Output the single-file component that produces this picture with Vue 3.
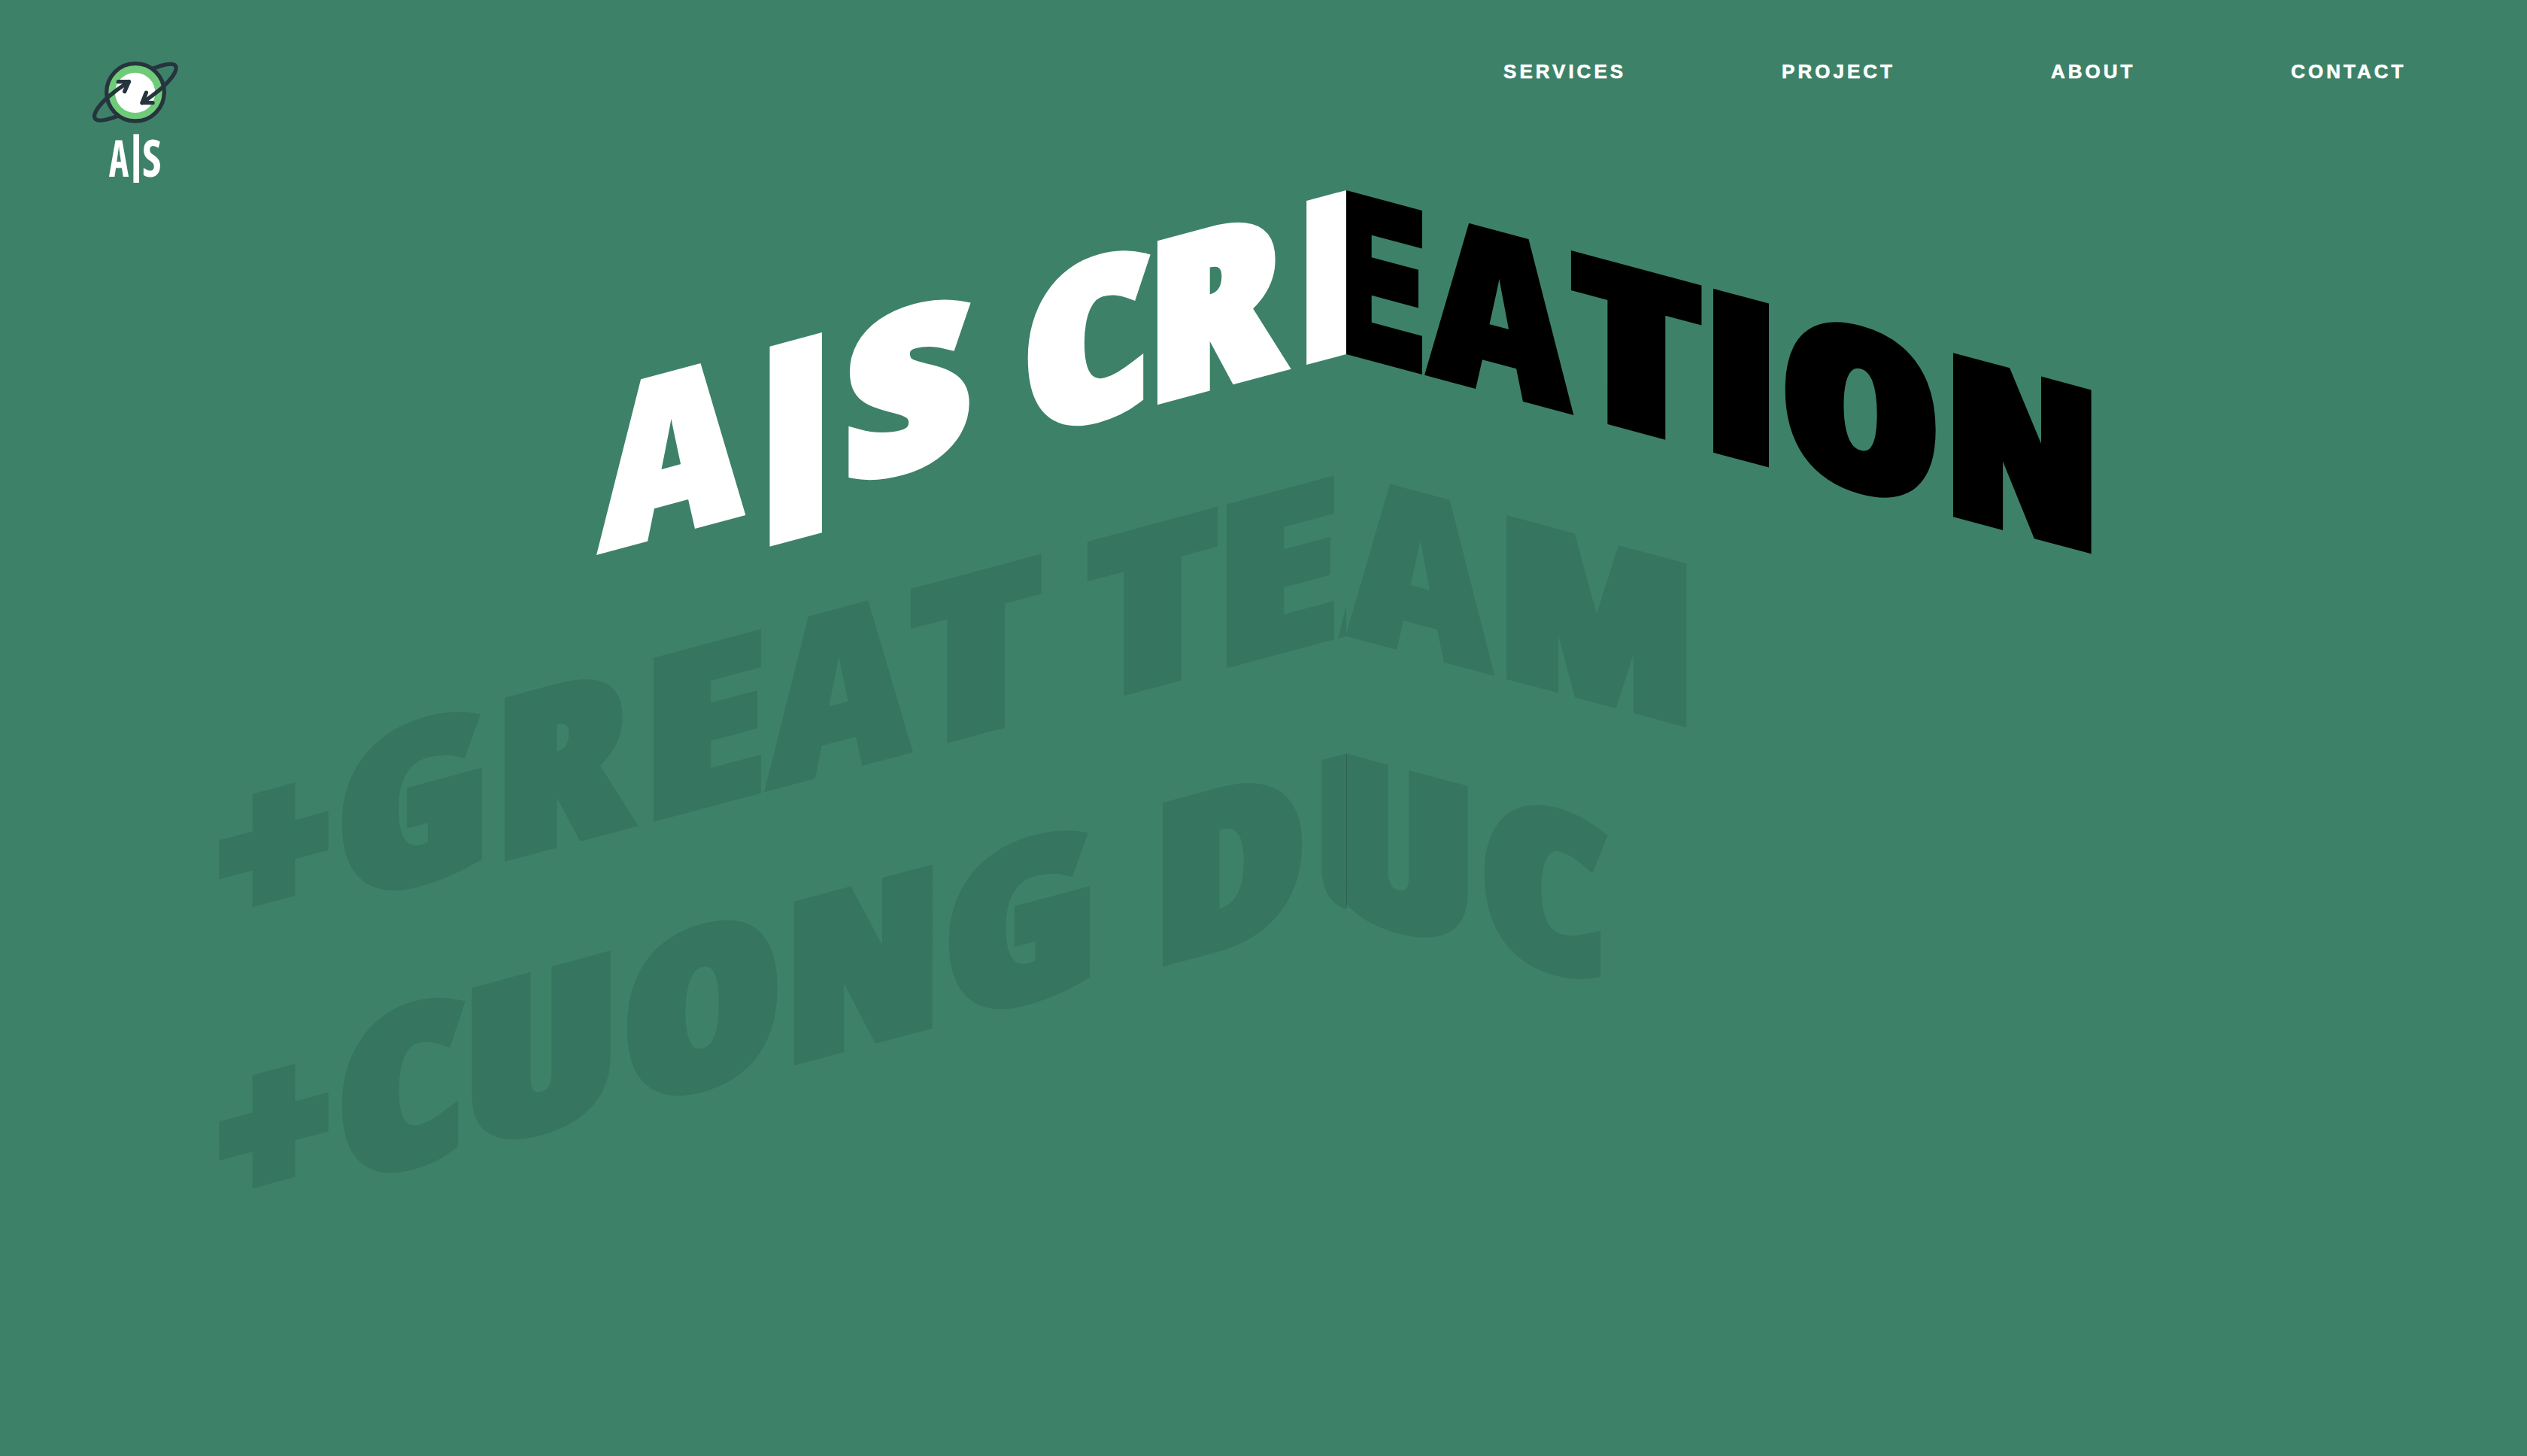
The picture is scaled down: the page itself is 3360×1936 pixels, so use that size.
<script setup>
const links = ['SERVICES', 'PROJECT', 'ABOUT', 'CONTACT']

// Ink box of every character in em: [left edge, ink width]
const ink = {
  'A': [0, 0.576],
  '|': [0.135, 0.138],
  'S': [0.024, 0.406],
  'C': [0.04, 0.437],
  'R': [0.056, 0.502],
  'E': [0.056, 0.342],
  'T': [0.02, 0.427],
  'I': [0.056, 0.17],
  'O': [0.04, 0.546],
  'N': [0.056, 0.544],
  'G': [0.04, 0.498],
  'U': [0.052, 0.488],
  'D': [0.056, 0.5],
  'M': [0.056, 0.685],
  '+': [0.036, 0.426],
}
// Vertical adjustments: [scale, shift in px]
const vertical = { '|': [0.89, -6.5], '+': [0.98, 1.5] }
// Outline thickness where it differs from the base one
const outline = { 'A': 3, 'E': 4, 'T': 5, 'R': 6.5, 'G': 6.5, 'D': 7 }

const size = 283
const stroke = 8
const capHeight = 0.714 * size

// [character, left edge, drawn width]
const lines = [
  {
    name: 'lead',
    glyphs: [
      ['A', 793.5, 197], ['|', 1021.5, 68.5], ['S', 1127, 162], [' ', 1291, 0],
      ['C', 1367.3, 159], ['R', 1538, 177], ['E', 1736, 143], ['A', 1885.3, 197],
      ['T', 2080.5, 174], ['I', 2266.7, 74], ['O', 2364.5, 201], ['N', 2586, 185.5],
    ],
  },
  {
    name: 'muted',
    glyphs: [
      ['+', 291.6, 143.5], ['G', 455, 184], ['R', 669.7, 177], ['E', 868, 142],
      ['A', 1017.5, 196.5], ['T', 1212, 174], [' ', 1386, 0], ['T', 1447, 173.5],
      ['E', 1630.4, 142], ['A', 1780.5, 197], ['M', 1992, 238],
    ],
  },
  {
    name: 'muted',
    glyphs: [
      ['+', 291.5, 143.5], ['C', 455, 160], ['U', 625.6, 188], ['O', 833.7, 201],
      ['N', 1055, 185.6], ['G', 1262, 185], [' ', 1449, 0], ['D', 1545, 189],
      ['U', 1756, 188], ['C', 1964, 160],
    ],
  },
].map(line => ({
  name: line.name,
  indent: line.glyphs[0][1],
  glyphs: line.glyphs.map(([char, left, width], i) => {
    const next = line.glyphs[i + 1]
    const slot = next ? next[1] - left : width
    if (char === ' ') return { char, slot, style: {} }
    const [bearing, inkWidth] = ink[char]
    const s = outline[char] || stroke
    const sx = width / (inkWidth * size + 2 * s)
    const fit = (capHeight + 2 * stroke) / (capHeight + 2 * s)
    const [sy, dy] = vertical[char] || [fit, stroke - s * fit]
    const dx = (s - bearing * size) * sx
    return {
      char,
      slot,
      style: {
        transform: `translate(${dx.toFixed(2)}px, ${dy.toFixed(2)}px) scale(${sx.toFixed(4)}, ${sy.toFixed(4)})`,
        WebkitTextStrokeWidth: `${2 * s}px`,
      },
    }
  }),
}))
</script>

<template>
  <div class="page">
    <header class="header">
      <a class="logo">
        <svg viewBox="0 0 480 600" width="160" height="200">
          <circle cx="240" cy="188" r="115" fill="#6fcb7a" />
          <circle cx="239" cy="190" r="80" fill="#fff" />
          <g fill="none" stroke="#26343d" stroke-width="16" stroke-linecap="round" stroke-linejoin="round">
            <circle cx="240" cy="188" r="115" />
            <path d="M312 93C350 76 386 71 398 80C411 92 396 124 350 167C325 190 295 211 268 230" />
            <path d="M283 190L267 230H309" />
            <path d="M170 283C130 298 95 306 82 296C67 283 84 250 130 208C155 186 185 164 214 146" />
            <path d="M172 146H214L197 185" />
          </g>
          <g class="mark" fill="#fff">
            <text transform="translate(135 525) scale(0.735 1)">A</text>
            <text class="bar" transform="translate(243.5 504)" text-anchor="middle">|</text>
            <text transform="translate(267 525) scale(0.87 1)">S</text>
          </g>
        </svg>
      </a>
      <nav class="nav">
        <a v-for="link in links" :key="link">{{ link }}</a>
      </nav>
    </header>
    <main class="hero">
      <section v-for="side in ['left', 'right']" :key="side" class="side" :class="side" :aria-hidden="side === 'right'">
        <div class="strip">
          <h2 v-for="(line, i) in lines" :key="i" class="line" :class="line.name" :style="{ paddingLeft: line.indent + 'px' }">
            <span v-for="(g, j) in line.glyphs" :key="j" class="slot" :style="{ width: g.slot + 'px' }"><span class="glyph" :style="g.style">{{ g.char }}</span></span>
          </h2>
        </div>
      </section>
      <i class="seam"></i>
    </main>
  </div>
</template>

<style>
html,
body {
  margin: 0;
  background: #3d8268;
}
</style>

<style scoped>
.page {
  display: flex;
  flex-direction: column;
  width: 3360px;
  height: 1936px;
  overflow: hidden;
  background: #3d8268;
}

.header {
  display: flex;
  flex: none;
  justify-content: space-between;
  height: 166.5px;
  padding: 0 160.5px 0 100px;
}

.logo {
  flex: none;
  position: relative;
  z-index: 1;
  height: 200px;
  margin-top: 60px;
}

.logo svg {
  display: block;
}

.mark text {
  font-family: "Open Sans", sans-serif;
  font-size: 202px;
  font-weight: 700;
  font-stretch: condensed;
}

.mark .bar {
  font-size: 195px;
}

.nav {
  display: flex;
  gap: 207px;
  padding-top: 79.5px;
}

.nav a {
  color: #fff;
  font: bold 26px/30px "Liberation Sans", Arial, sans-serif;
  letter-spacing: 4px;
  -webkit-text-stroke: 0.6px #fff;
}

.hero {
  position: relative;
  display: flex;
  flex: none;
}

.side {
  flex: none;
  height: 1150px;
  overflow: hidden;
}

.left {
  width: 1790px;
  color: #fff;
  transform: skewY(-15deg);
  transform-origin: 100% 0;
}

.right {
  width: 1570px;
  color: #000;
  transform: skewY(15deg);
  transform-origin: 0 0;
}

.right .strip {
  margin-left: -1780px;
}

.strip {
  width: 3360px;
}

.line {
  display: flex;
  box-sizing: border-box;
  height: 374.6px;
  margin: 0;
  font-family: "Open Sans", sans-serif;
  font-size: 283px;
  font-weight: 800;
  font-stretch: condensed;
  line-height: 374.6px;
}

.muted {
  color: #36755f;
}

.slot {
  flex: none;
  white-space: pre;
}

.glyph {
  display: inline-block;
  transform-origin: 0 297px;
  -webkit-text-stroke: 16px currentColor;
}

.seam {
  position: absolute;
  top: 836px;
  left: 1790px;
  width: 1px;
  height: 205px;
  background: rgba(0, 0, 0, 0.15);
}
</style>
